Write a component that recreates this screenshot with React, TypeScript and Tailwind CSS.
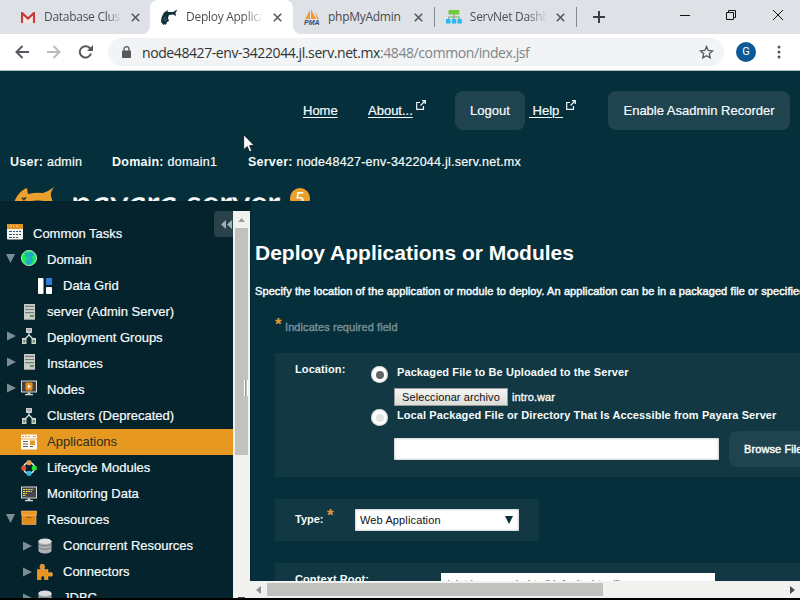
import React from "react";

type IconName =
  | "calendar" | "globe" | "grid" | "server" | "groups" | "nodes" | "apps"
  | "cycle" | "monitor" | "box" | "db" | "puzzle";

function TreeIcon({ name }: { name: IconName }) {
  return (
    <svg width="16" height="16" viewBox="0 0 16 16" className="block shrink-0">
      {name === "calendar" && (
        <g>
          <rect width="16" height="15.5" rx="1" fill="#f4f4f0" />
          <path d="M0 5V1q0-1 1-1h14q1 0 1 1v4z" fill="#e4941f" />
          <path d="M3 2h2M6 2h1M9 2h2" stroke="#f8d9a8" />
          <path d="M2 7.500h3M6 7.500h2M9 7.500h2M12 7.500h2M2 10.500h3M6 10.500h2M9 10.500h2M12 10.500h2M2 13.500h3M6 13.500h2M9 13.500h2" stroke="#3e5560" />
        </g>
      )}
      {name === "globe" && (
        <g>
          <circle cx="8" cy="8" r="7.6" fill="#12f04c" stroke="#e9f4ec" strokeWidth=".8" />
          <path d="M4 2l4 1 4-1 1 3-2 2 1 3-2 4-4 1-1-3 1-3-2-3z" fill="#22a8d0" />
          <path d="M7 4l2 3-2 3-2-1z" fill="#25c389" />
        </g>
      )}
      {name === "grid" && (
        <g>
          <rect x="1" width="5.5" height="16" rx="1" fill="#fff" />
          <rect x="9" width="6" height="7" rx="1" fill="#2d7fdc" />
          <rect x="9" y="9" width="6" height="7" rx="1" fill="#fff" />
        </g>
      )}
      {name === "server" && (
        <g>
          <rect x="3" width="11" height="16" fill="#c9ccc8" />
          <path d="M4 2.5h9M4 5.5h9M4 8.5h9" stroke="#737b7c" strokeWidth="1.5" />
          <path d="M4 4h9M4 7h9" stroke="#edefeb" strokeWidth=".7" />
          <rect x="9" y="11" width="4" height="2" fill="#4f9753" />
          <path d="M3 15.5h11" stroke="#92999a" />
        </g>
      )}
      {name === "groups" && (
        <g>
          <path d="M8 5v2L4 11M8 7l4 4" stroke="#dce2e2" strokeWidth="1.2" fill="none" />
          <rect x="5" width="6" height="5" fill="#c7cbca" />
          <path d="M6 2h4" stroke="#8b9393" />
          <path d="M1 10h4.5v6H1zM10.500 10H15v6h-4.500z" fill="#cdd2cf" />
          <path d="M2.300 12h2v2.500h-2zM11.800 12h2v2.500h-2z" fill="#558c57" />
        </g>
      )}
      {name === "nodes" && (
        <g>
          <rect x=".5" y="1" width="15" height="11" fill="#454242" stroke="#d8d8d5" />
          <rect x="4.500" y="2.500" width="7" height="8" rx="1.500" fill="#e98e16" />
          <path d="M7 4.500v4L10 6.500z" fill="#fff" />
          <path d="M6.500 12.500h3V14H12v1.300H4V14h2.500z" fill="#d4d5d1" />
        </g>
      )}
      {name === "apps" && (
        <g>
          <rect y=".5" width="16" height="15" rx="1" fill="#fffdf5" />
          <path d="M1 2.500h9" stroke="#e39a37" strokeWidth="1.200" strokeDasharray="2 1" />
          <path d="M12 2.500h3" stroke="#e39a37" />
          <path d="M0 5h16" stroke="#e39a37" strokeWidth=".8" />
          <path d="M2 7.500h5M2 10h5M2 12.500h5M9 12.500h3" stroke="#506069" strokeWidth="1.100" />
          <rect x="9" y="6.500" width="5" height="4.500" fill="#e8951f" />
        </g>
      )}
      {name === "cycle" && (
        <g>
          <circle cx="8" cy="8" r="5.500" fill="none" stroke="#e4e8e8" strokeWidth="1.500" />
          <circle cx="8" cy="2.700" r="2.600" fill="#dfa04b" />
          <circle cx="13.300" cy="8" r="2.600" fill="#28ea35" />
          <circle cx="8" cy="13.300" r="2.600" fill="#36b9df" />
          <circle cx="2.700" cy="8" r="2.600" fill="#e3522d" />
        </g>
      )}
      {name === "monitor" && (
        <g>
          <rect x=".5" y="1" width="15" height="11" fill="#42474a" stroke="#d5d7d5" />
          <path d="M2 3.500h10M2 5.500h9M2 7.500h4M2 9.500h3" stroke="#f0dc4c" strokeDasharray="2 .6" />
          <path d="M6.500 12.500h3V14H12v1.300H4V14h2.500z" fill="#d4d5d1" />
        </g>
      )}
      {name === "box" && (
        <g>
          <path d="M1 5h14v9.500H1z" fill="#e18c1c" stroke="#f1c078" strokeWidth=".6" />
          <path d="M.3 1h15.400v4H.3z" fill="#ea971f" stroke="#f1c78b" strokeWidth=".6" />
          <path d="M5.500 7.500h5" stroke="#a8600c" strokeWidth="1.200" />
        </g>
      )}
      {name === "db" && (
        <g>
          <path d="M1.500 3v9.500c0 4 13 4 13 0V3z" fill="#acb0b2" />
          <ellipse cx="8" cy="3.300" rx="6.500" ry="2.800" fill="#dedfdf" />
          <path d="M1.500 5.500c1 3 12 3 13 0M1.500 9c1 3 12 3 13 0" fill="none" stroke="#707980" strokeWidth="1" />
        </g>
      )}
      {name === "puzzle" && (
        <path d="M.3 15.700V5.500H4Q2.800 4 3 2.400a2.300 2.300 0 0 1 4.600 0Q7.700 4 6.800 5.500H11v3.300h1.500a2 2 0 1 1 0 3.200H11v3.700H7.500v-2.200a1.700 1.700 0 0 0-3.400 0v2.200z" fill="#e99621" stroke="#f0bb70" strokeWidth=".5" />
      )}
    </svg>
  );
}

interface Row {
  label: string;
  icon: IconName;
  pad: string;
  arrow?: "open" | "closed";
  lift?: string;
}

const rows: Row[] = [
  { label: "Common Tasks", icon: "calendar", pad: "pl-[7px]", lift: "-mt-[4px]" },
  { label: "Domain", icon: "globe", pad: "pl-[5px]", arrow: "open", lift: "-mt-[4px]" },
  { label: "Data Grid", icon: "grid", pad: "pl-[37px]" },
  { label: "server (Admin Server)", icon: "server", pad: "pl-[21px]" },
  { label: "Deployment Groups", icon: "groups", pad: "pl-[5px]", arrow: "closed", lift: "-mt-[4px]" },
  { label: "Instances", icon: "server", pad: "pl-[5px]", arrow: "closed", lift: "-mt-[4px]" },
  { label: "Nodes", icon: "nodes", pad: "pl-[5px]", arrow: "closed", lift: "-mt-[4px]" },
  { label: "Clusters (Deprecated)", icon: "groups", pad: "pl-[21px]" },
  { label: "Applications", icon: "apps", pad: "pl-[21px]" },
  { label: "Lifecycle Modules", icon: "cycle", pad: "pl-[21px]" },
  { label: "Monitoring Data", icon: "monitor", pad: "pl-[21px]" },
  { label: "Resources", icon: "box", pad: "pl-[5px]", arrow: "open", lift: "-mt-[4px]" },
  { label: "Concurrent Resources", icon: "db", pad: "pl-[21px]", arrow: "closed" },
  { label: "Connectors", icon: "puzzle", pad: "pl-[21px]", arrow: "closed" },
  { label: "JDBC", icon: "db", pad: "pl-[21px]", arrow: "closed" },
];

function Sidebar() {
  return (
    <aside className="w-[233px] shrink-0 overflow-hidden bg-[#04232c]">
      <div className="relative pt-[20px]">
        <div className="absolute left-[214px] top-[10px] flex h-[26px] w-[26px] items-center rounded bg-[#294149] pl-[7px]">
          <svg width="11" height="9" viewBox="0 0 11 9"><path d="M5 0v9L0 4.500zM11 0v9L6 4.500z" fill="#a3aeb1" /></svg>
        </div>
        {rows.map((r) => {
          const active = r.label === "Applications";
          return (
            <div key={r.label} className={`flex h-[26px] items-center gap-[10px] text-[13px] ${r.pad} ${active ? "bg-[#e79820] text-[#2c2f20]" : "text-[#f8fcfc] [-webkit-text-stroke:0.2px]"}`}>
              <div className={`flex items-center ${r.lift ?? ""}`}>
                {r.arrow && (
                  <span className="block w-4">
                    <svg width="12" height="10" viewBox="0 0 12 10" className="block">
                      {r.arrow === "open" ? <path d="M1 1h9L5.500 10z" fill="#7b8d93" /> : <path d="M2 .5v9L11 5z" fill="#7b8d93" />}
                    </svg>
                  </span>
                )}
                <TreeIcon name={r.icon} />
              </div>
              <span className="whitespace-nowrap">{r.label}</span>
            </div>
          );
        })}
      </div>
    </aside>
  );
}

function CloseX() {
  return <svg width="9" height="9" viewBox="0 0 9 9" className="shrink-0"><path d="M.8.8l7.400 7.400M8.200.8L.8 8.200" stroke="#55595d" strokeWidth="1.600" /></svg>;
}

function Tabs() {
  return (
    <div className="flex h-[34px] bg-white text-[12px] tracking-[-0.28px] text-[#474b50] font-['Open_Sans','Noto_Sans',sans-serif]">
      <div className="flex w-[150px] items-center rounded-br-lg bg-[#dee1e6] pl-[21px]">
        <svg width="14" height="11" viewBox="0 0 14 11"><path d="M1 11V1l6 5.500L13 1v10" fill="#f4e8e7" stroke="#c93a36" strokeWidth="2.200" /></svg>
        <span className="ml-[9px] w-[78px] overflow-hidden whitespace-nowrap bg-gradient-to-r from-[#474b50] from-80% to-transparent bg-clip-text text-transparent">Database Cluster</span>
        <span className="ml-[9px] flex"><CloseX /></span>
      </div>
      <div className="flex w-[143px] bg-[#dee1e6]">
        <div className="flex w-[143px] items-center rounded-t-lg bg-white pl-[11px]">
          <svg width="17" height="17" viewBox="0 0 17 17"><path d="M2.500 16L0 13 .5 8.500 3 3.500 7 1l-.5 2H12L16.500.5 14.500 4l.5 3-3-1.500-4 .5L7 9l1 3-2 1-1 3-1-1z" fill="#12303b" /><path d="M2 10l3-2M3 12l3-2" stroke="#7d929a" strokeWidth=".6" /></svg>
          <span className="ml-[8px] w-[78px] overflow-hidden whitespace-nowrap bg-gradient-to-r from-[#474b50] from-75% to-transparent bg-clip-text text-transparent">Deploy Applications</span>
          <span className="ml-[9px] flex"><CloseX /></span>
        </div>
      </div>
      <div className="flex w-[142px] items-center rounded-bl-lg bg-[#dee1e6] pl-[11px]">
        <svg width="17" height="16" viewBox="0 0 17 16"><path d="M6 1v9H1zM7 0l5 10H7zM11 3l4 7h-2z" fill="#ef9a32" /><text x="0" y="15.500" fontSize="7" fontWeight="bold" fontStyle="italic" fontFamily="Liberation Sans" letterSpacing="0" fill="#3f456f">PMA</text></svg>
        <span className="ml-[7px] w-[78px] whitespace-nowrap">phpMyAdmin</span>
        <span className="ml-[8px] flex"><CloseX /></span>
        <span className="ml-[11px] h-5 w-px bg-[#85898e]" />
      </div>
      <div className="flex w-[142px] items-center bg-[#dee1e6] pl-[11px]">
        <svg width="16" height="14" viewBox="0 0 16 14"><path d="M8 4v3M2.500 9V7h11v2M8 7v2" stroke="#72ac70" fill="none" /><rect x="2.500" width="11" height="4.500" rx="1" fill="#70ca3e" /><path d="M0 9h4.500v4.500H0zM5.800 9h4.500v4.500H5.800zM11.500 9H16v4.500h-4.500z" fill="#28baf0" /></svg>
        <span className="ml-[8px] w-[78px] overflow-hidden whitespace-nowrap bg-gradient-to-r from-[#474b50] from-75% to-transparent bg-clip-text text-transparent">ServNet Dashboard</span>
        <span className="ml-[9px] flex"><CloseX /></span>
        <span className="ml-[11px] h-5 w-px bg-[#85898e]" />
      </div>
      <div className="flex flex-1 items-center bg-[#dee1e6] pl-[16px]">
        <svg width="12" height="12" viewBox="0 0 12 12"><path d="M6 0v12M0 6h12" stroke="#3a3d41" strokeWidth="2" /></svg>
        <svg width="104" height="12" viewBox="0 0 104 12" className="-mt-[5px] ml-[75px]"><path d="M0 6.500h10M46.500 3.500h7v7h-7zM48.500 3V1.500h7v7H54M93 1l10 10M103 1L93 11" fill="none" stroke="#111" /></svg>
      </div>
    </div>
  );
}

function Toolbar() {
  return (
    <div className="flex h-[37px] items-center border-b border-[#a9bfc4] bg-white pl-[15px] font-['Open_Sans','Noto_Sans',sans-serif]">
      <svg width="78" height="14" viewBox="0 0 78 14"><path d="M14 7H1.500M7.500 1l-6 6 6 6" fill="none" stroke="#55585c" strokeWidth="2" /><path d="M32 7h12.500M38.500 1l6 6-6 6" fill="none" stroke="#b9bbbe" strokeWidth="2" /><path d="M76 8.500A5.700 5.700 0 1 1 74.700 3L77 5" fill="none" stroke="#55585c" strokeWidth="2" /><path d="M78 0v6h-6z" fill="#55585c" /></svg>
      <div className="ml-[15px] flex h-[28px] w-[616px] items-center rounded-full bg-[#f1f3f4] pl-[14px]">
        <svg width="9" height="12" viewBox="0 0 9 12"><path d="M2 5V3.200a2.500 2.500 0 0 1 5 0V5" fill="none" stroke="#55585c" strokeWidth="1.300" /><rect y="4.500" width="9" height="7.500" rx="1" fill="#55585c" /></svg>
        <span className="ml-[11px] w-[557px] whitespace-nowrap text-[14px] tracking-[-0.41px] text-[#303336]">node48427-env-3422044.jl.serv.net.mx<span className="text-[#808487]">:4848/common/index.jsf</span></span>
        <svg width="15" height="14" viewBox="0 0 15 14" className="shrink-0"><path d="M7.500 1.500l1.700 4 4.300.4-3.200 2.800.9 4.200-3.700-2.200-3.700 2.200.9-4.200L1.500 5.900l4.300-.4z" fill="none" stroke="#55585c" strokeWidth="1.300" /></svg>
      </div>
      <div className="ml-[12px] flex size-5 items-center justify-center rounded-full bg-[#0b5996] text-[11px] text-white font-[Roboto,sans-serif]">G</div>
      <svg width="4" height="14" viewBox="0 0 4 14" className="ml-[21px]"><g fill="#55585c"><circle cx="2" cy="2" r="1.500" /><circle cx="2" cy="7" r="1.500" /><circle cx="2" cy="12" r="1.500" /></g></svg>
    </div>
  );
}

function External() {
  return <svg width="10" height="10" viewBox="0 0 10 10" className="-mt-[11px] ml-px"><path d="M4 2.500H.7v6.800h6.800V6M6 .7h3.300V4M9 1L4.500 5.500" fill="none" stroke="#eff5f6" strokeWidth="1.200" /></svg>;
}

function Header() {
  return (
    <header className="h-[130px] overflow-hidden bg-[#042f3b] text-[13px] text-[#f8fcfc] [-webkit-text-stroke:0.2px]">
      <div className="flex items-center pl-[303px] pt-[20px]">
        <span className="w-[65px] underline underline-offset-2">Home</span>
        <span className="w-[47px] underline underline-offset-2">About...</span>
        <External />
        <span className="ml-[29px] flex h-[39px] w-[70px] items-center justify-center rounded-lg bg-[#1f434f]">Logout</span>
        <span className="ml-[4px] w-[36px] whitespace-pre underline underline-offset-2"> Help </span>
        <External />
        <span className="ml-[32px] flex h-[39px] w-[182px] items-center justify-center whitespace-nowrap rounded-lg bg-[#1f434f]">Enable Asadmin Recorder</span>
      </div>
      <div className="flex whitespace-nowrap pl-[10px] pt-[22px] text-[12.500px] leading-[20px]">
        <span className="w-[102px] tracking-[0.250px]"><b className="[-webkit-text-stroke:0]">User:</b> admin</span>
        <span className="w-[136px] tracking-[0.250px]"><b className="[-webkit-text-stroke:0]">Domain:</b> domain1</span>
        <span className="tracking-[0.240px]"><b className="[-webkit-text-stroke:0]">Server:</b> node48427-env-3422044.jl.serv.net.mx</span>
      </div>
      <div className="flex pl-[14px] pt-[15px] [-webkit-text-stroke:0]">
        <svg width="42" height="16" viewBox="0 0 42 16"><path d="M0 16C2 9 7 3 13 1l1 6q8-2 15-1Q35 4 40 0q-4 6-3 9l2 7h-3q-3-2-11-2.500Q17 13 14 16z" fill="#eba02e" /><path d="M7 11l6-1-3 4zM9 14l3-2" fill="#343f35" /></svg>
        <span className="ml-[15px] h-[15px] w-[219px] whitespace-nowrap font-['Lato',sans-serif] text-[32px] italic leading-[30px] text-white"><span className="inline-block origin-left scale-x-[1.170] skew-x-[8deg] [-webkit-text-stroke:0.4px_white]">payara server</span></span>
        <span className="mt-[1px] flex size-5 items-center justify-center rounded-full bg-[#eba02e] pt-[2px] text-[17px] font-['Lato',sans-serif]">5</span>
      </div>
    </header>
  );
}

function Radio({ checked }: { checked?: boolean }) {
  return (
    <span className="flex size-[17px] shrink-0 items-center justify-center rounded-full bg-white shadow-[inset_0_0_2px_#8a9395]">
      <span className={checked ? "size-2 rounded-full bg-[#646666]" : "size-2 rounded-full bg-[#e4e5e1]"} />
    </span>
  );
}

function Main() {
  return (
    <main className="h-[380px] overflow-hidden border-l border-[#04232c] bg-[#042f3b] text-[11px] text-[#f8fcfc]">
      <h1 className="whitespace-nowrap pl-[4px] pt-[38px] text-[21px] font-bold leading-[28px] text-white">Deploy Applications or Modules</h1>
      <p className="whitespace-nowrap pl-[4px] pt-[16px] leading-[16px] tracking-[0.100px] [-webkit-text-stroke:0.45px]">Specify the location of the application or module to deploy. An application can be in a packaged file or specified as a directory.</p>
      <div className="flex pl-[24px] pt-[17px] leading-[22px] text-[#788f97]">
        <span className="-mt-px w-[10px] text-[17px] font-bold leading-[20px] text-[#e59b33]">*</span><span className="tracking-[0.080px] [-webkit-text-stroke:0.4px]">Indicates required field</span>
      </div>
      <div className="ml-[24px] mt-[15px] flex h-[124px] w-[600px] bg-[#113843] pl-[20px] font-bold">
        <div className="w-[76px] pt-[8px] leading-[16px] tracking-[0.1px]">Location:</div>
        <div className="pt-[11px]">
          <div className="flex h-[18px] items-center whitespace-nowrap"><span className="mt-[3px]"><Radio checked /></span><span className="-mt-[2px] ml-[9px] tracking-[0.1px]">Packaged File to Be Uploaded to the Server</span></div>
          <div className="ml-[23px] mt-[6px] flex h-[18px] items-center font-normal">
            <span className="flex h-[18px] w-[114px] items-center justify-center whitespace-nowrap border border-[#999] bg-gradient-to-b from-[#f5f5f3] to-[#dcdcd9] text-[11px] tracking-[0.1px] text-[#111]">Seleccionar archivo</span>
            <span className="ml-[4px] tracking-[0.1px] [-webkit-text-stroke:0.35px]">intro.war</span>
          </div>
          <div className="flex h-[18px] items-center whitespace-nowrap"><span className="mt-[5px]"><Radio /></span><span className="ml-[9px] tracking-[0.090px]">Local Packaged File or Directory That Is Accessible from Payara Server</span></div>
          <div className="ml-[23px] mt-[7px] flex items-center">
            <div className="h-[22px] w-[325px] bg-white shadow-[inset_0_0_3px_#9aaaae]" />
            <div className="ml-[10px] flex h-[36px] w-[100px] items-center whitespace-nowrap rounded-lg bg-[#1f434f] pl-[15px] font-normal tracking-[0.1px] [-webkit-text-stroke:0.45px]">Browse Files...</div>
          </div>
        </div>
      </div>
      <div className="ml-[24px] mt-[22px] flex h-[42px] w-[264px] items-center bg-[#113843] pl-[20px]">
        <span className="-mt-px w-[32px] font-bold">Type:</span><span className="-mt-[8px] h-[22px] w-[28px] text-[17px] font-bold leading-[22px] text-[#e59b33]">*</span>
        <div className="flex h-[22px] w-[164px] items-center bg-white pl-[5px] text-[#111] shadow-[inset_0_0_3px_#9aaaae]">
          <span className="w-[145px] tracking-[0.130px]">Web Application</span>
          <svg width="8" height="9" viewBox="0 0 8 9"><path d="M0 0h8L4 8z" fill="#08313d" /></svg>
        </div>
      </div>
      <div className="ml-[24px] mt-[22px] flex h-[42px] w-[600px] bg-[#113843] pl-[20px]">
        <span className="w-[146px] pt-[8px] font-bold leading-[16px] tracking-[0.1px]">Context Root:</span>
        <div className="mt-[10px] flex h-[22px] w-[274px] items-center overflow-hidden whitespace-nowrap bg-white pl-[5px] text-[#555]">/ dot is appended to "default-virtual"</div>
      </div>
    </main>
  );
}

export default function App() {
  return (
    <div className="relative h-[600px] w-[800px] overflow-hidden bg-[#04232c] font-['Liberation_Sans',Arial,sans-serif]">
      <Tabs />
      <Toolbar />
      <Header />
      <div className="flex h-[397px]">
        <Sidebar />
        <div className="w-[17px] shrink-0 pt-[10px]">
          <div className="flex h-[387px] flex-col items-center bg-[#f1f2f0]">
            <div className="flex h-[17px] items-center"><svg width="7" height="4" viewBox="0 0 7 4"><path d="M0 4l3.500-4L7 4z" fill="#9a9d9d" /></svg></div>
            <div className="flex h-[227px] w-[13px] items-center justify-end bg-[#c1c2c0]">
              <svg width="4" height="16" viewBox="0 0 4 16" className="mt-[93px]"><path d="M.5 0v16M3.500 0v16" stroke="#fff" /><path d="M1.500 0v16" stroke="#999" /></svg>
            </div>
            <div className="mt-auto h-px w-[7px] bg-[#4a4c4c]" />
          </div>
        </div>
        <div className="min-w-0 flex-1">
          <Main />
          <div className="flex h-[17px] items-center bg-[#f1f1ef] pl-[6px]">
            <svg width="5" height="8" viewBox="0 0 5 8"><path d="M5 0v8L0 4z" fill="#8d9090" /></svg>
            <div className="ml-[6px] h-[13px] w-[336px] bg-[#c1c2c0]" />
            <svg width="5" height="8" viewBox="0 0 5 8" className="ml-[187px]"><path d="M0 0v8l5-4z" fill="#4a4c4c" /></svg>
          </div>
        </div>
      </div>
      <div className="h-[2px] bg-black" />
      <svg width="12" height="19" viewBox="0 0 12 19" className="absolute left-[243px] top-[134px]"><path d="M.7.7v15l3.500-3.200 2.300 5.300 2.300-1-2.300-5.200h4.700z" fill="#fff" stroke="#111" strokeWidth=".8" /></svg>
    </div>
  );
}
